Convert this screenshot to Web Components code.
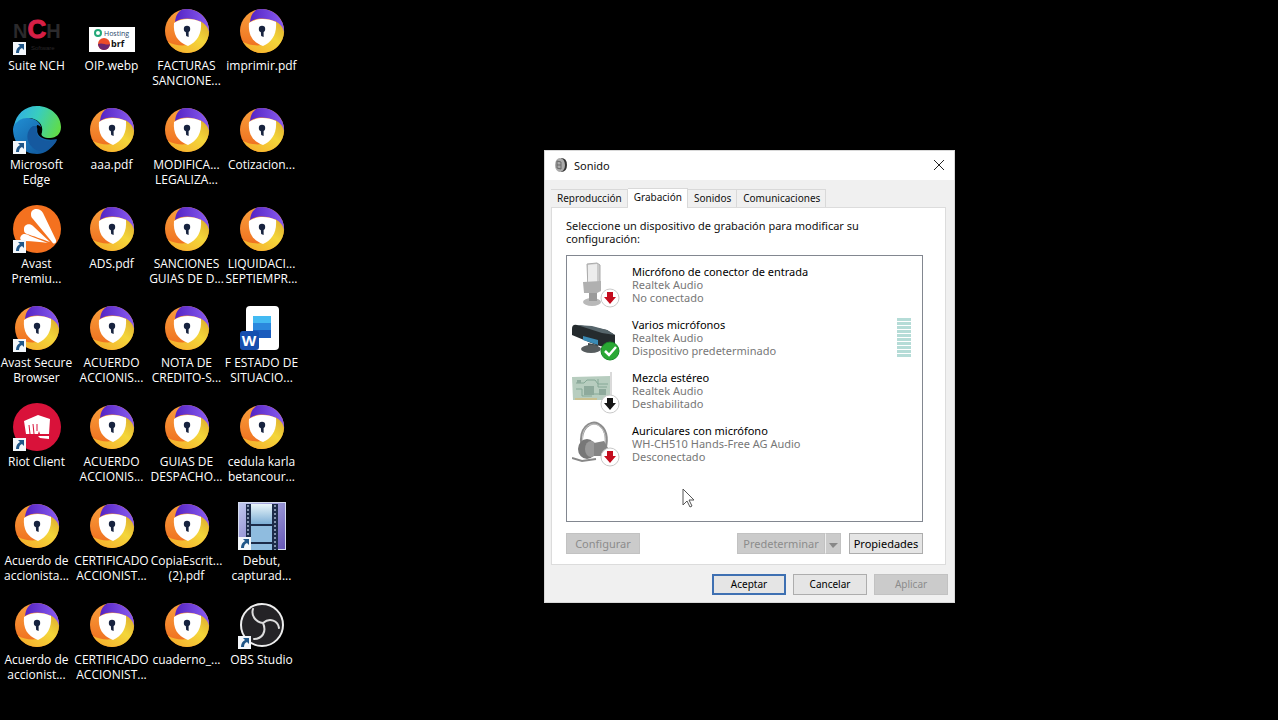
<!DOCTYPE html>
<html lang="es">
<head>
<meta charset="utf-8">
<meta name="viewport" content="width=device-width, initial-scale=1">
<title>Escritorio</title>
<style>
  html, body {
    margin: 0;
    min-height: 100%;
    background: #000;
  }

  body {
    font-family: 'Noto Sans', 'Open Sans', sans-serif;
    font-size: 12px;
  }
</style>
</head>
<body>
<desk-top>
  <desktop-icon icon="nch" shortcut>Suite NCH</desktop-icon>
  <desktop-icon icon="edge" shortcut>Microsoft<br>Edge</desktop-icon>
  <desktop-icon icon="avast" shortcut>Avast<br>Premiu...</desktop-icon>
  <desktop-icon icon="browser" shortcut>Avast Secure<br>Browser</desktop-icon>
  <desktop-icon icon="riot" shortcut>Riot Client</desktop-icon>
  <desktop-icon icon="browser">Acuerdo de<br>accionista...</desktop-icon>
  <desktop-icon icon="browser">Acuerdo de<br>accionist...</desktop-icon>

  <desktop-icon icon="image">OIP.webp</desktop-icon>
  <desktop-icon icon="browser">aaa.pdf</desktop-icon>
  <desktop-icon icon="browser">ADS.pdf</desktop-icon>
  <desktop-icon icon="browser">ACUERDO<br>ACCIONIS...</desktop-icon>
  <desktop-icon icon="browser">ACUERDO<br>ACCIONIS...</desktop-icon>
  <desktop-icon icon="browser">CERTIFICADO<br>ACCIONIST...</desktop-icon>
  <desktop-icon icon="browser">CERTIFICADO<br>ACCIONIST...</desktop-icon>

  <desktop-icon icon="browser">FACTURAS<br>SANCIONE...</desktop-icon>
  <desktop-icon icon="browser">MODIFICA...<br>LEGALIZA...</desktop-icon>
  <desktop-icon icon="browser">SANCIONES<br>GUIAS DE D...</desktop-icon>
  <desktop-icon icon="browser">NOTA DE<br>CREDITO-S...</desktop-icon>
  <desktop-icon icon="browser">GUIAS DE<br>DESPACHO...</desktop-icon>
  <desktop-icon icon="browser">CopiaEscrit...<br>(2).pdf</desktop-icon>
  <desktop-icon icon="browser">cuaderno_...</desktop-icon>

  <desktop-icon icon="browser">imprimir.pdf</desktop-icon>
  <desktop-icon icon="browser">Cotizacion...</desktop-icon>
  <desktop-icon icon="browser">LIQUIDACI...<br>SEPTIEMPR...</desktop-icon>
  <desktop-icon icon="word">F ESTADO DE<br>SITUACIO...</desktop-icon>
  <desktop-icon icon="browser">cedula karla<br>betancour...</desktop-icon>
  <desktop-icon icon="debut" shortcut>Debut,<br>capturad...</desktop-icon>
  <desktop-icon icon="obs" shortcut>OBS Studio</desktop-icon>

  <sound-window slot="window" heading="Sonido">
    <tab-strip slot="tabs" labels="Reproducción,Grabación,Sonidos,Comunicaciones" selected="1"></tab-strip>
    <span slot="intro">Seleccione un dispositivo de grabación para modificar su configuración:</span>
    <device-item icon="mic" badge="unplugged" name="Micrófono de conector de entrada" driver="Realtek Audio" status="No conectado"></device-item>
    <device-item icon="array" badge="default" name="Varios micrófonos" driver="Realtek Audio" status="Dispositivo predeterminado"><level-meter></level-meter></device-item>
    <device-item icon="card" badge="disabled" name="Mezcla estéreo" driver="Realtek Audio" status="Deshabilitado"></device-item>
    <device-item icon="headset" badge="unplugged" name="Auriculares con micrófono" driver="WH-CH510 Hands-Free AG Audio" status="Desconectado"></device-item>
    <push-button slot="left" disabled>Configurar</push-button>
    <push-button slot="right" split disabled>Predeterminar</push-button>
    <push-button slot="right">Propiedades</push-button>
    <push-button slot="footer" primary>Aceptar</push-button>
    <push-button slot="footer">Cancelar</push-button>
    <push-button slot="footer" disabled>Aplicar</push-button>
  </sound-window>

  <mouse-pointer slot="window"></mouse-pointer>
</desk-top>

<script>
const DESKTOP_ICONS = {
  browser: `
    <defs>
      <linearGradient id="o" x1="0" y1="0" x2="0" y2="1"><stop offset="0" stop-color="#f9a03c"/><stop offset="1" stop-color="#ee6a1c"/></linearGradient>
      <linearGradient id="p" x1="0" y1="0" x2="1" y2="0"><stop offset="0" stop-color="#5423c4"/><stop offset="1" stop-color="#8a5cf0"/></linearGradient>
      <linearGradient id="y" x1="0" y1="1" x2="1" y2="0"><stop offset="0" stop-color="#f6a92a"/><stop offset=".6" stop-color="#f4d63a"/><stop offset="1" stop-color="#d9a92b"/></linearGradient>
    </defs>
    <circle cx="24" cy="24" r="22" fill="url(#o)"/>
    <path fill="url(#p)" d="M12 15C13 8 15 5 19 2.6A22 22 0 0 1 46 26C44 19 41 16 36 14C29 11 19 10 12 15z"/>
    <path fill="url(#y)" d="M37 14C42 17 45 20 46 25A22 22 0 0 1 5 35C11 38 17 39 25 38z"/>
    <path fill="#fff" d="M11 16C18 11 30 11 38 15C39 27 34 35 25 39C14 35 10 27 11 16z"/>
    <circle cx="24" cy="22" r="3.2" fill="#17233f"/>
    <path fill="#17233f" d="M22.6 23h3v7l-2.4-1z"/>`,
  nch: `
    <text x="0" y="31" font-family="Liberation Sans" font-weight="700" font-size="20" fill="#2b2a2c">N<tspan font-size="26" fill="#d71f46" stroke="#d71f46">C</tspan>H</text>
    <text x="18" y="43" font-family="Liberation Sans" font-size="6" fill="#2a2729">Software</text>`,
  edge: `
    <defs>
      <linearGradient id="g" x1="0" y1=".3" x2="1" y2=".6"><stop offset="0" stop-color="#31aee5"/><stop offset=".45" stop-color="#38cdbf"/><stop offset="1" stop-color="#61dc48"/></linearGradient>
      <linearGradient id="b" x1="0" y1="0" x2="1" y2="1"><stop offset="0" stop-color="#218fd3"/><stop offset="1" stop-color="#0e4f94"/></linearGradient>
    </defs>
    <path fill="url(#b)" d="M0 23C1 15 8 11 16 12C23 13 28 17 28 22C25 21 23 24 25 28C27 32 34 35 44 33C40 42 32 48 24 48C10 48 0 37 0 23z"/>
    <path fill="#15599f" d="M20 20C13 24 12 35 20 42C27 48 39 44 44 34C36 37 25 34 24 27C23 24 24 21 27 20z"/>
    <path fill="url(#g)" d="M1 20C3 8 12 0 24 0C38 0 48 10 48 21C48 28 43 32 37 32C31 32 27 30 29 26C31 18 23 11 14 12C8 12 3 16 1 20z"/>
    <path d="M24 19C30 20 29 25 28 28C26 27 23 22 24 19z"/>`,
  avast: `
    <circle cx="24" cy="24" r="24" fill="#f4711f"/>
    <path fill="#fff" d="M18 9C18 3 27 2 30 8L43 35C44 38 41 40 39 37L20 14C18 12 18 11 18 9z"/>
    <path fill="#fff" d="M11 24C11 19 17 18 20 21L37 37C29 34 20 31 14 29C11 28 11 26 11 24z"/>
    <path fill="#fff" d="M8 31C10 28 14 29 17 31L35 38C27 37 20 36 12 36C8 36 6 34 8 31z"/>`,
  riot: `
    <circle cx="24" cy="24" r="24" fill="#d9123a"/>
    <path fill="#fff" d="M11 18L25 12L37 16L36 31H27L26 28L25 31H13z"/>
    <path fill="none" stroke="#d9123a" d="M16 22l1 9M20 21l1 10M24 21v7"/>
    <path fill="#fff" d="M25 33h11v3l-9-1z"/>`,
  image: `
    <rect x="1" y="20" width="46" height="25" fill="#fff"/>
    <circle cx="10" cy="26" r="3" fill="none" stroke="#22a878" stroke-width="2"/>
    <text x="16" y="29" font-family="Open Sans" font-size="7" fill="#28486c">Hosting</text>
    <circle cx="16" cy="37" r="6" fill="#ed4c28"/>
    <path fill="#6b2770" d="M10 37a6 6 0 0 0 12 0c-4 2-7-2-12 0z"/>
    <text x="23" y="40" font-family="Open Sans" font-weight="700" font-size="9" fill="#111">brf</text>`,
  word: `
    <g transform="translate(0 2)">
      <rect x="8" y="0" width="33" height="44" rx="4" fill="#fff"/>
      <rect x="15" y="10" width="18" height="8" fill="#43baf2"/>
      <rect x="15" y="17" width="18" height="8" fill="#2b88dd"/>
      <rect x="15" y="24" width="18" height="8" fill="#1a5cbd"/>
      <rect x="2" y="25" width="19" height="19" rx="3" fill="#164faf"/>
      <text x="11" y="40" text-anchor="middle" font-family="Open Sans" font-weight="700" font-size="15" fill="#fff">W</text>
    </g>`,
  debut: `
    <defs>
      <linearGradient id="f" x1="0" y1="0" x2="1" y2="1"><stop offset="0" stop-color="#c3ccf0"/><stop offset="1" stop-color="#6354b4"/></linearGradient>
      <linearGradient id="s" x1="0" y1="0" x2="0" y2="1"><stop offset="0" stop-color="#eaf6fa"/><stop offset="1" stop-color="#7caed6"/></linearGradient>
    </defs>
    <rect width="48" height="48" fill="url(#f)" stroke="#d5dcee" stroke-width="2"/>
    <rect x="8" y="2" width="32" height="46" fill="#1c2b49"/>
    <rect x="13" y="2" width="21" height="20" fill="url(#s)"/>
    <rect x="13" y="24" width="21" height="16" fill="#8fbcdf"/>
    <rect x="13" y="42" width="21" height="6" fill="#8fbcdf"/>
    <path stroke="#8494ae" stroke-width="2" stroke-dasharray="2 2" d="M10 3v45M37 3v45"/>`,
  obs: `
    <circle cx="24" cy="24" r="21" fill="#242326" stroke="#eee" stroke-width="2"/>
    <path fill="none" stroke="#ddd" stroke-width="2" stroke-linecap="round" d="M15 8C13 14 17 21 25 22C32 16 40 20 41 27M25 22C29 31 24 38 16 38"/>`
};

const DEVICE_ICONS = {
  mic: `
    <ellipse cx="20" cy="41" rx="9" ry="4" fill="#b9b9b9"/>
    <path fill="#9b9b9b" d="M17 28h8v12h-8z"/>
    <path fill="#c9c9c9" stroke="#aaa" d="M15 3l10-1 3 2v22l-12 2z"/>
    <path fill="#ececec" d="M16 4l9-1v19l-9 1z"/>
    <path fill="#b0b0b0" d="M11 21l18-1v10l-4 2H12z"/>`,
  array: `
    <path fill="#252b2e" d="M0 15Q0 10 5 11L20 13L35 16L43 21V30L36 34L24 31L0 21z"/>
    <path fill="#56656b" d="M5 11L20 12L35 16L43 21L30 19z"/>
    <path fill="#3a8ab4" d="M11 22L26 26V31L11 26z"/>
    <path fill="#424b4e" d="M16 29l10 2v6H16z"/>
    <ellipse cx="19" cy="35" rx="10" ry="4" fill="#565c5e"/>`,
  card: `
    <path fill="#b7cdbf" d="M0 10L38 9V31L31 33H1z"/>
    <path fill="none" stroke="#85a896" stroke-width="1" d="M4 16h8l3-3h8l3 4h10M4 22h6v7h10M22 27h12M26 12v8h9"/>
    <path fill="#8eaa9c" d="M12 19h10v9H12zM27 22h7v6h-7zM5 13h4v3H5z"/>
    <path fill="#c9c08f" d="M3 31h22v2H3z"/>
    <path stroke="#b4b4b4" d="M39 5v31"/>`,
  headset: `
    <path fill="none" stroke="#8c8c8c" stroke-width="3" d="M10 25C7 9 18 0 26 4C34 8 36 18 33 29"/>
    <path fill="none" stroke="#c7c7c7" stroke-width="1" d="M11 23C8 9 18 1 26 5C33 9 35 18 32 28"/>
    <ellipse cx="15" cy="29" rx="9" ry="10" fill="#777"/>
    <ellipse cx="19" cy="29" rx="6" ry="8" fill="#999"/>
    <path fill="#858585" d="M22 23L32 21L36 28V36H22z"/>
    <path fill="none" stroke="#888" stroke-width="2" d="M0 38L10 41L24 39"/>`
};

const BADGES = {
  unplugged: `<circle cx="10" cy="10" r="9" fill="#fff" stroke="#c9c9c9"/><path fill="#c40d1e" d="M7 4h6v5h3l-6 7-6-7h3z"/>`,
  disabled: `<circle cx="10" cy="10" r="9" fill="#fff" stroke="#c9c9c9"/><path fill="#151515" d="M7 4h6v5h3l-6 7-6-7h3z"/>`,
  default: `<circle cx="10" cy="10" r="9" fill="#2aa834" stroke="#1a8a28"/><path fill="none" stroke="#fff" stroke-width="2.5" d="M5 10l4 4 7-8"/>`
};

class DeskTop extends HTMLElement {
  constructor() {
    super();
    this.attachShadow({ mode: 'open' });
  }

  connectedCallback() {
    this.shadowRoot.innerHTML = `
      <style>
        :host {
          display: block;
          position: relative;
          min-height: 100vh;
          box-sizing: border-box;
          padding-top: 7px;
          background: #000;
        }

        .icons {
          display: grid;
          grid-auto-flow: column;
          grid-template-rows: repeat(7, 99px);
          grid-auto-columns: 75px;
        }
      </style>
      <main class="icons"><slot></slot></main>
      <slot name="window"></slot>
    `;
  }
}

class DesktopIcon extends HTMLElement {
  constructor() {
    super();
    this.attachShadow({ mode: 'open' });
  }

  connectedCallback() {
    const arrow = `
      <rect y="35" width="13" height="13" fill="#f3f7fb"/>
      <path fill="#1f5688" d="M5 37h6v6l-2-2q-3 1-3 5H3q0-5 4-7z"/>`;

    this.shadowRoot.innerHTML = `
      <style>
        :host {
          display: block;
          font-family: 'Open Sans', 'Noto Sans', sans-serif;
        }

        button {
          display: flex;
          flex-direction: column;
          align-items: center;
          gap: 3px;
          width: 100%;
          padding: 0 2px 0 0;
          border: 0;
          background: none;
          color: #fff;
          font: inherit;
          line-height: 15px;
          text-align: center;
          white-space: nowrap;
        }

        svg {
          width: 48px;
          height: 48px;
        }
      </style>
      <button type="button">
        <svg viewBox="0 0 48 48" aria-hidden="true">
          ${DESKTOP_ICONS[this.getAttribute('icon')]}
          ${this.hasAttribute('shortcut') ? arrow : ''}
        </svg>
        <span><slot></slot></span>
      </button>
    `;
  }
}

class SoundWindow extends HTMLElement {
  constructor() {
    super();
    this.attachShadow({ mode: 'open' });
  }

  connectedCallback() {
    this.shadowRoot.innerHTML = `
      <style>
        :host {
          display: block;
          position: absolute;
          left: 544px;
          top: 150px;
          width: 411px;
          box-sizing: border-box;
          border: 1px solid #d8d8d8;
          background: #f0f0f0;
          color: #111;
          font-size: 11px;
          line-height: 13px;
        }

        header {
          display: flex;
          align-items: center;
          gap: 6px;
          height: 28px;
          padding: 0 9px 1px;
          background: #fff;
        }

        h1 {
          flex: 1;
          margin: 0;
          font-size: 11px;
          font-weight: 400;
        }

        .close {
          display: flex;
          padding: 0;
          border: 0;
          background: none;
        }

        .body {
          padding: 8px 8px 6px 6px;
        }

        .panel {
          padding: 11px 22px 10px 14px;
          border: 1px solid #dcdcdc;
          border-top: 0;
          background: #fff;
        }

        p {
          margin: 0 0 10px;
        }

        .list {
          min-height: 267px;
          box-sizing: border-box;
          padding: 2px 11px 0 5px;
          border: 1px solid #828790;
        }

        .row {
          display: flex;
          justify-content: space-between;
          margin-top: 11px;
        }

        .group {
          display: flex;
          gap: 8px;
        }

        footer {
          display: flex;
          justify-content: flex-end;
          gap: 7px;
          padding: 3px 6px 7px;
          font-size: 10px;
        }
      </style>
      <header>
        <svg width="14" height="16" viewBox="0 0 14 16" aria-hidden="true">
          <path fill="#333" d="M7 1q6 0 6 7t-6 7z"/>
          <ellipse cx="6" cy="8" rx="5" ry="7" fill="#aaa"/>
          <path fill="none" stroke="#666" d="M3 4l4 1v7l-4-1zM3 8h4"/>
        </svg>
        <h1>${this.getAttribute('heading')}</h1>
        <button class="close" type="button" aria-label="Cerrar">
          <svg width="12" height="12" viewBox="0 0 12 12"><path stroke="#222" d="M1 1l10 10M11 1L1 11"/></svg>
        </button>
      </header>
      <div class="body">
        <slot name="tabs"></slot>
        <section class="panel">
          <p><slot name="intro"></slot></p>
          <div class="list"><slot></slot></div>
          <div class="row">
            <div class="group"><slot name="left"></slot></div>
            <div class="group"><slot name="right"></slot></div>
          </div>
        </section>
      </div>
      <footer><slot name="footer"></slot></footer>
    `;
  }
}

class TabStrip extends HTMLElement {
  constructor() {
    super();
    this.attachShadow({ mode: 'open' });
  }

  connectedCallback() {
    const selected = Number(this.getAttribute('selected'));
    const tabs = this.getAttribute('labels').split(',').map((label, i) =>
      `<button type="button" role="tab" aria-selected="${i === selected}">${label}</button>`
    ).join('');

    this.shadowRoot.innerHTML = `
      <style>
        :host {
          display: block;
          border-bottom: 1px solid #dcdcdc;
          font-size: 10px;
        }

        div {
          display: flex;
          align-items: flex-end;
        }

        button {
          height: 18px;
          padding: 0 5px 0 6px;
          border: 1px solid #d9d9d9;
          border-width: 1px 1px 0 0;
          background: #f0f0f0;
          color: inherit;
          font: inherit;
        }

        button[aria-selected='true'] {
          height: 20px;
          margin-bottom: -1px;
          padding-bottom: 3px;
          background: #fff;
        }
      </style>
      <div role="tablist">${tabs}</div>
    `;
  }
}

class DeviceItem extends HTMLElement {
  constructor() {
    super();
    this.attachShadow({ mode: 'open' });
  }

  connectedCallback() {
    this.shadowRoot.innerHTML = `
      <style>
        :host {
          display: flex;
          align-items: center;
          height: 53px;
          color: #777;
        }

        .icon {
          width: 48px;
          height: 48px;
          margin-right: 12px;
        }

        .text {
          flex: 1;
          white-space: nowrap;
        }

        .name {
          color: #000;
        }
      </style>
      <svg class="icon" viewBox="0 0 48 48" aria-hidden="true">
        ${DEVICE_ICONS[this.getAttribute('icon')]}
        <g transform="translate(28 27)">${BADGES[this.getAttribute('badge')]}</g>
      </svg>
      <div class="text">
        <div class="name">${this.getAttribute('name')}</div>
        <div>${this.getAttribute('driver')}</div>
        <div>${this.getAttribute('status')}</div>
      </div>
      <slot></slot>
    `;
  }
}

class LevelMeter extends HTMLElement {
  constructor() {
    super();
    this.attachShadow({ mode: 'open' });
  }

  connectedCallback() {
    this.shadowRoot.innerHTML = `
      <style>
        :host {
          display: grid;
          gap: 1px;
          width: 14px;
        }

        i {
          height: 3px;
          background: #b5dcd7;
        }
      </style>
      ${'<i></i>'.repeat(10)}
    `;
  }
}

class PushButton extends HTMLElement {
  constructor() {
    super();
    this.attachShadow({ mode: 'open' });
  }

  connectedCallback() {
    const disabled = this.hasAttribute('disabled') ? 'disabled' : '';
    const more = `
      <button class="more" type="button" aria-label="Más opciones" ${disabled}>
        <svg width="9" height="6" viewBox="0 0 9 6"><path fill="#888" d="M0 1h9L4 6z"/></svg>
      </button>`;

    this.shadowRoot.innerHTML = `
      <style>
        :host {
          display: flex;
        }

        button {
          width: 74px;
          height: 21px;
          padding: 0;
          border: 1px solid #adadad;
          background: #e5e5e5;
          color: #000;
          font: inherit;
          white-space: nowrap;
        }

        button:disabled {
          border-color: #c2c2c2;
          background: #cbcbcb;
          color: #8b8b8b;
        }

        :host([primary]) button {
          border: 2px solid #3e70b2;
        }

        :host([split]) button {
          width: 88px;
        }

        :host([split]) .more {
          width: 16px;
          border-left-color: #eee;
        }
      </style>
      <button type="button" ${disabled}><slot></slot></button>
      ${this.hasAttribute('split') ? more : ''}
    `;
  }
}

class MousePointer extends HTMLElement {
  constructor() {
    super();
    this.attachShadow({ mode: 'open' });
  }

  connectedCallback() {
    this.shadowRoot.innerHTML = `
      <style>
        :host {
          display: block;
          position: absolute;
          left: 682px;
          top: 488px;
          pointer-events: none;
        }
      </style>
      <svg width="13" height="21" viewBox="0 0 13 21" aria-hidden="true">
        <path fill="#fff" stroke="#555" d="M1 1v16l4-4 3 6 2-1-3-6h5z"/>
      </svg>
    `;
  }
}

customElements.define('desk-top', DeskTop);
customElements.define('desktop-icon', DesktopIcon);
customElements.define('sound-window', SoundWindow);
customElements.define('tab-strip', TabStrip);
customElements.define('device-item', DeviceItem);
customElements.define('level-meter', LevelMeter);
customElements.define('push-button', PushButton);
customElements.define('mouse-pointer', MousePointer);
</script>
</body>
</html>
